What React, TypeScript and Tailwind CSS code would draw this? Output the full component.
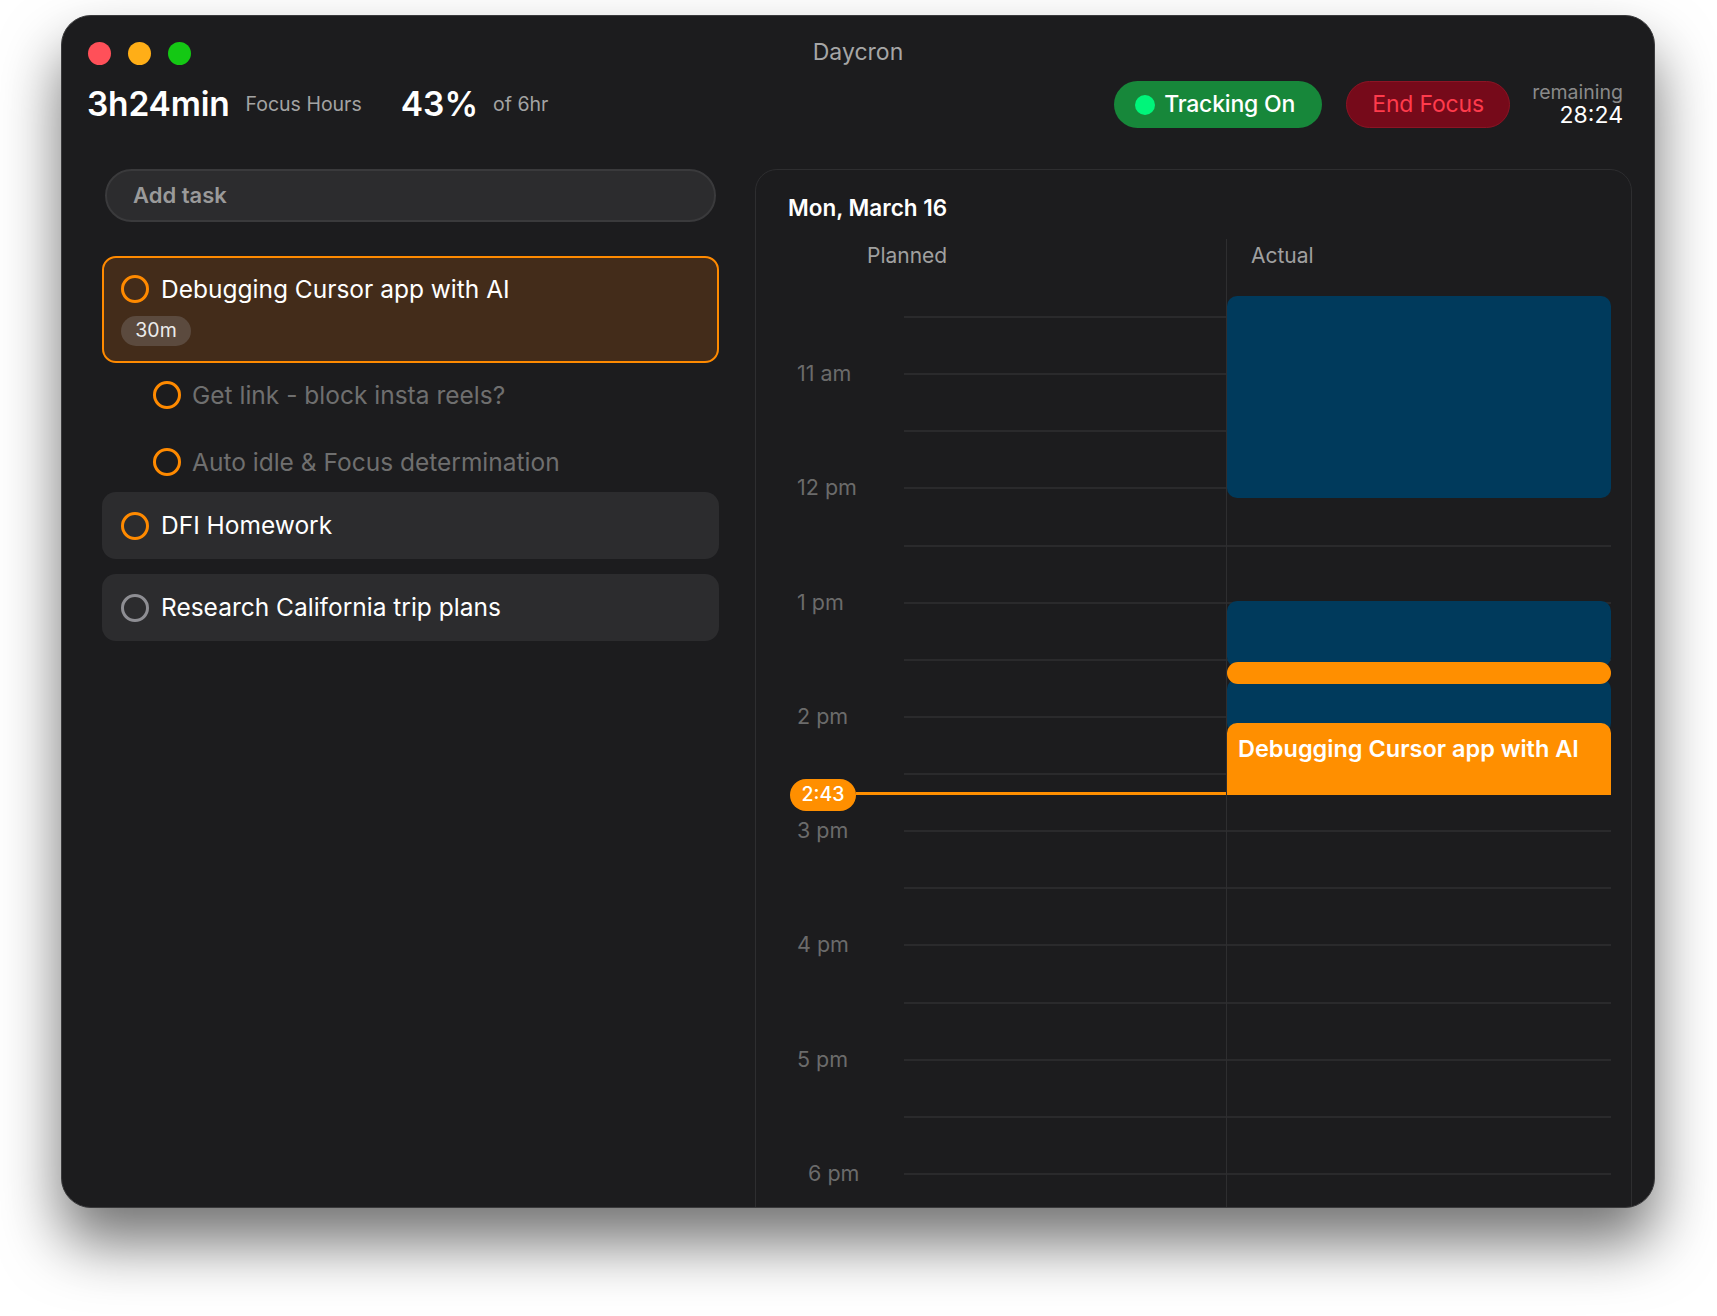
import React from "react";

const ROW = 57.14;

function Ring({ color }: { color: string }) {
  return (
    <span
      className={`block w-[28px] h-[28px] shrink-0 rounded-full border-[3px] ${color}`}
    />
  );
}

const hourLabels: Record<number, string> = {
  1: "11 am",
  3: "12 pm",
  5: "1 pm",
  7: "2 pm",
  9: "3 pm",
  11: "4 pm",
  13: "5 pm",
  15: "6 pm",
};

export default function App() {
  const rows = Array.from({ length: 17 }, (_, i) => i);
  return (
    <div className="w-[1717px] h-[1316px] bg-white overflow-hidden font-['Inter','Noto_Sans',sans-serif]">
      <div className="ml-[61px] mt-[15px] w-[1594px] h-[1193px] rounded-[30px] bg-[#1c1c1e] border border-[#3a3a3c] overflow-hidden shadow-[0_35px_60px_rgba(0,0,0,0.55)] flex flex-col">
        {/* Title bar */}
        <div className="h-[65px] pt-[6px] shrink-0 grid grid-cols-[1fr_auto_1fr] items-center px-[26px]">
          <div className="flex items-center gap-[17px] pt-[3px]">
            <span className="block w-[23px] h-[23px] rounded-full bg-[#ff5059]" />
            <span className="block w-[23px] h-[23px] rounded-full bg-[#ffae17]" />
            <span className="block w-[23px] h-[23px] rounded-full bg-[#14c814]" />
          </div>
          <div className="text-[23px] leading-[28px] text-[#a6a6a6]">Daycron</div>
          <div />
        </div>

        {/* Header */}
        <div className="h-[47px] shrink-0 flex items-center justify-between pl-[25px] pr-[31px]">
          <div className="flex items-center">
            <span className="text-[33.5px] font-semibold text-white tracking-[-0.2px]">3h24min</span>
            <span className="ml-[16px] text-[19.5px] text-[#a3a3a3]">Focus Hours</span>
            <span className="ml-[39px] text-[33.5px] font-semibold text-white">43%</span>
            <span className="ml-[15px] text-[19.5px] text-[#a3a3a3]">of 6hr</span>
          </div>
          <div className="flex items-center">
            <div className="w-[208px] h-[47px] rounded-full bg-[#17873a] flex items-center pl-[21px] gap-[9px]">
              <span className="block w-[20px] h-[20px] rounded-full bg-[#00f57a]" />
              <span className="text-[23px] font-medium text-white tracking-[-0.2px]">Tracking On</span>
            </div>
            <div className="ml-[24px] w-[164px] h-[47px] rounded-full bg-[#760a1a] border border-[#8c1424] flex items-center justify-center">
              <span className="text-[23px] text-[#ff3b4c] tracking-[-0.2px]">End Focus</span>
            </div>
            <div className="ml-[22px] flex flex-col items-end">
              <span className="text-[19.5px] leading-[20px] text-[#8a8a8a]">remaining</span>
              <span className="text-[23px] leading-[26px] text-white">28:24</span>
            </div>
          </div>
        </div>

        {/* Content */}
        <div className="mt-[41px] flex pl-[40px] pr-[24px] gap-[36px]">
          {/* Left column */}
          <div className="w-[617px] shrink-0 flex flex-col">
            <div className="mx-[3px] h-[53px] rounded-full bg-[#2c2c2e] border-2 border-[#3a3a3c] flex items-center pl-[26px]">
              <span className="text-[22px] font-semibold text-[#9a9a9a]">Add task</span>
            </div>

            <div className="mt-[34px] h-[107px] rounded-[14px] border-2 border-[#ff8a00] bg-[#432c1a] px-[17px] pt-[17px]">
              <div className="h-[28px] flex items-center gap-[12px]">
                <Ring color="border-[#ff8a00]" />
                <span className="text-[24.5px] text-white">Debugging Cursor app with AI</span>
              </div>
              <div className="mt-[13px] h-[30px] w-[70px] rounded-full bg-[#5b4a3e] flex items-center justify-center">
                <span className="text-[19.5px] text-[#ececec]">30m</span>
              </div>
            </div>

            <div className="mt-[18px] h-[28px] flex items-center gap-[11px] pl-[51px]">
              <Ring color="border-[#ff8a00]" />
              <span className="text-[24.5px] text-[#6f6f6f]">Get link - block insta reels?</span>
            </div>
            <div className="mt-[39px] h-[28px] flex items-center gap-[11px] pl-[51px]">
              <Ring color="border-[#ff8a00]" />
              <span className="text-[24.5px] text-[#6f6f6f]">Auto idle &amp; Focus determination</span>
            </div>

            <div className="mt-[16px] h-[67px] rounded-[14px] bg-[#2c2c2e] flex items-center gap-[12px] pl-[19px]">
              <Ring color="border-[#ff8a00]" />
              <span className="text-[24.5px] text-white">DFI Homework</span>
            </div>
            <div className="mt-[15px] h-[67px] rounded-[14px] bg-[#2c2c2e] flex items-center gap-[12px] pl-[19px]">
              <Ring color="border-[#8e8e93]" />
              <span className="text-[24.5px] text-white">Research California trip plans</span>
            </div>
          </div>

          {/* Calendar panel */}
          <div className="w-[877px] shrink-0 h-[1100px] rounded-t-[22px] border border-[#2e2e30] flex flex-col">
            <div className="pt-[24px] pl-[32px] text-[22.5px] leading-[28px] font-semibold text-white">
              Mon, March 16
            </div>
            <div className="mt-[17px] flex flex-1">
              {/* Planned column */}
              <div className="relative w-[470px] shrink-0">
                <div className="h-[77px] pt-[5px] pl-[111px] text-[21px] leading-[24px] text-[#a0a0a0]">
                  Planned
                </div>
                {rows.map((i) => (
                  <div key={i} className="flex items-start" style={{ height: ROW }}>
                    <div
                      className={`w-[148px] shrink-0 h-[26px] -mt-[13px] text-[21.5px] leading-[26px] text-[#6b6b6b] ${
                        i === 15 ? "pl-[52px]" : "pl-[41px]"
                      }`}
                    >
                      {hourLabels[i] ?? ""}
                    </div>
                    <div className="flex-1 h-full border-t-2 border-[#2a2a2c]" />
                  </div>
                ))}
                {/* now line */}
                <div className="absolute left-[100px] right-0 top-[553px] h-[3px] bg-[#ff8f00]" />
                <div className="absolute left-[34px] top-[540px] w-[66px] h-[32px] rounded-full bg-[#ff8f00] flex items-center justify-center">
                  <span className="text-[19.5px] font-medium text-white">2:43</span>
                </div>
              </div>

              {/* Actual column */}
              <div className="relative w-[385px] shrink-0 border-l border-[#2e2e30]">
                <div className="h-[77px] pt-[5px] pl-[24px] text-[21px] leading-[24px] text-[#a0a0a0]">
                  Actual
                </div>
                {rows.map((i) => (
                  <div key={i} className="border-t-2 border-[#2a2a2c]" style={{ height: ROW }} />
                ))}
                <div className="absolute left-0 right-0 top-[57px] h-[202px] rounded-[10px] bg-[#003a5c]" />
                <div className="absolute left-0 right-0 top-[362px] h-[66px] rounded-[10px] bg-[#003a5c]" />
                <div className="absolute left-0 right-0 top-[440px] h-[54px] rounded-[10px] bg-[#003a5c]" />
                <div className="absolute left-0 right-0 top-[423px] h-[22px] rounded-full bg-[#ff8f00]" />
                <div className="absolute left-0 right-0 top-[484px] h-[72px] rounded-t-[10px] bg-[#ff8f00] pl-[11px] pt-[12px]">
                  <span className="text-[23.5px] leading-[28px] font-semibold text-white">
                    Debugging Cursor app with AI
                  </span>
                </div>
              </div>
            </div>
          </div>
        </div>
      </div>
    </div>
  );
}
